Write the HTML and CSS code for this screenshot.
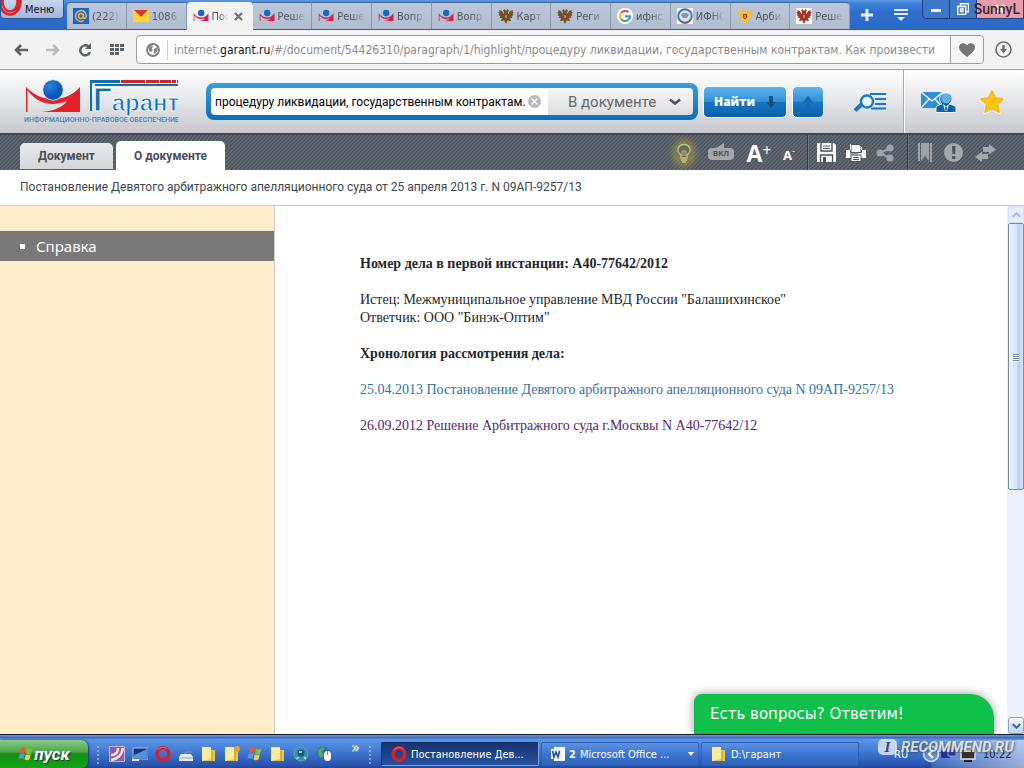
FILE: index.html
```html
<!DOCTYPE html>
<html lang="ru">
<head>
<meta charset="utf-8">
<title>Постановление Девятого арбитражного апелляционного суда</title>
<link rel="stylesheet" href="styles.css">
</head>
<body>
<svg class="sprite" aria-hidden="true">
  <symbol id="garant" viewBox="0 0 16 14"><path d="M.7 12V4c2 3.500 4.500 4.500 7.500 4.500S13.500 7 15.500 4v8H5.500c3-.2 5-1 6.500-3C7 11.500 3.500 9 1.500 6.500V12z" fill="#d81e4c"/><circle cx="8.200" cy="4" r="3.200" fill="#1768c4"/></symbol>
  <symbol id="eagle" viewBox="0 0 16 16"><path d="M8 3 6.500 1 5 2.500 6 4 5.500 6 4 3 1 2l.5 2L0 4l1.500 2L.5 7l2 1.500L1.500 10 4 10 3 13l2 0 1-1 2 4 2-4 1 1h2l-1-3 2.500 0-1-1.500 2-1.500-1-1L16 4l-1.500 0L15 2l-3 1-1.500 3L10 4l1-1.500L9.500 1z" fill="currentColor"/><path d="M6 6h4v3.500L8 11.500 6 9.500z" fill="#a03322"/><path d="M8 7v3" stroke="#f3d28a"/></symbol>
  <symbol id="opera" viewBox="0 0 16 16"><ellipse cx="8" cy="8" rx="5.800" ry="6.200" fill="none" stroke="#d9202b" stroke-width="3.600"/><path d="M3 4c2-3 7-3.500 9-1" fill="none" stroke="#f26a6a"/></symbol>
  <symbol id="folder" viewBox="0 0 16 16"><path d="M1 1h9v3h4v11H1z" fill="#e9c64b"/><path d="M1 1h9v12l-9 2z" fill="#fbeb9d"/><path d="M11 5v10" stroke="#c29a28"/></symbol>
  <symbol id="flag" viewBox="0 0 16 16"><path d="M3 2c2-1 3-1 5 0L7 7C5 6 4 6 2 7z" fill="#ee5a2d"/><path d="M9 2.500c2 1 3 1 5.500 0L13 8c-2 1-3 1-5 0z" fill="#7fc242"/><path d="M1.700 8c2-1 3-1 5 0l-1.200 5c-2-1-3-1-5 0z" fill="#4a9de8"/><path d="M7.700 8.500c2 1 3 1 5 0l-1.200 5c-2 1-3 1-5 0z" fill="#fccb3a"/></symbol>
</svg>

<header class="browser">
  <div class="tabbar">
    <button class="menu" type="button"><svg class="menu-logo" viewBox="0 0 22 18"><ellipse cx="9" cy="2" rx="9" ry="11" fill="none" stroke="#d9242b" stroke-width="5.500"/><path d="M1 6c2 6 8 9 13 5" fill="none" stroke="#f08a85"/></svg>Меню</button>
    <nav class="tabs" aria-label="Вкладки">
      <a class="tab" href="#"><svg class="fav" viewBox="0 0 16 16"><rect width="16" height="16" fill="#1567d2"/><circle cx="8" cy="8" r="2.400" fill="none" stroke="#f9b233" stroke-width="1.500"/><path d="M10.400 5.500V9c0 2 3 1.500 3-1A5.400 5.400 0 1 0 11 12.500" fill="none" stroke="#f9b233" stroke-width="1.500"/></svg><span>(222)</span></a>
      <a class="tab" href="#"><svg class="fav" viewBox="0 0 16 16"><path d="M0 2h16v12H0z" fill="#fbd62f"/><path d="M1 2h14L8 9z" fill="#e5352c"/><path d="m0 2 8 8 8-8" fill="none" stroke="#fff0a0" stroke-width=".6"/></svg><span>1086</span></a>
      <a class="tab active" href="#"><svg class="fav"><use href="#garant"/></svg><span>Пос</span><svg class="close" viewBox="0 0 9 9"><path d="m1 1 7 7m0-7L1 8" stroke="#777" stroke-width="2.400"/></svg></a>
      <a class="tab" href="#"><svg class="fav"><use href="#garant"/></svg><span>Реше</span></a>
      <a class="tab" href="#"><svg class="fav"><use href="#garant"/></svg><span>Реше</span></a>
      <a class="tab" href="#"><svg class="fav"><use href="#garant"/></svg><span>Вопр</span></a>
      <a class="tab" href="#"><svg class="fav"><use href="#garant"/></svg><span>Вопр</span></a>
      <a class="tab" href="#"><svg class="fav bronze"><use href="#eagle"/></svg><span>Карт</span></a>
      <a class="tab" href="#"><svg class="fav bronze"><use href="#eagle"/></svg><span>Реги</span></a>
      <a class="tab" href="#"><svg class="fav" viewBox="0 0 16 16"><circle cx="8" cy="8" r="8" fill="#fff"/><g fill="none" stroke-width="2"><path d="M4 5a5 5 0 0 1 7.500-.8" stroke="#ea4335"/><path d="M4 5a5 5 0 0 0 0 6" stroke="#fbbc05"/><path d="M4 11a5 5 0 0 0 7.300.8" stroke="#34a853"/><path d="M8 8.300h5c0 1.500-.6 2.700-1.700 3.500" stroke="#4285f4"/></g></svg><span>ифнс</span></a>
      <a class="tab" href="#"><svg class="fav" viewBox="0 0 16 16"><path fill="#fff" d="M0 0h16v16H0z"/><circle cx="8" cy="8" r="6.800" fill="#d9e4ed" stroke="#3976b8" stroke-width="2"/><path d="M4 7c1-3 7-3 8 0l-2 3H6z" fill="#8d969d"/><path d="M3 13a7 7 0 0 0 9 1" stroke="#d33" fill="none"/></svg><span>ИФНС</span></a>
      <a class="tab" href="#"><svg class="fav gold"><use href="#eagle"/></svg><span>Арби</span></a>
      <a class="tab" href="#"><svg class="fav red"><use href="#eagle"/></svg><span>Реше</span></a>
    </nav>
    <button class="bar-btn" type="button" aria-label="Новая вкладка"><svg width="12" height="12" viewBox="0 0 12 12"><path d="M6 0v12M0 6h12" stroke="#e4effb" stroke-width="3"/></svg></button>
    <button class="bar-btn" type="button" aria-label="Список вкладок"><svg width="14" height="13" viewBox="0 0 14 13"><path d="M0 1h14M0 5h14" stroke="#e4effb" stroke-width="2"/><path d="M3 8h8l-4 4z" fill="#e4effb"/></svg></button>
    <div class="window-btns">
      <button type="button" aria-label="Свернуть"><svg width="12" height="12" viewBox="0 0 12 12"><path d="M1 6h10v3H1z" fill="#fff"/></svg></button>
      <button type="button" aria-label="Восстановить"><svg width="12" height="12" viewBox="0 0 12 12"><path d="M3.500 3V.7h8v8H9M.7 3.500h8v8h-8zM3.500 6h2.500v2.500H3.500z" fill="none" stroke="#fff" stroke-width="1.400"/></svg></button>
      <button type="button" aria-label="Закрыть"><svg width="10" height="10" viewBox="0 0 10 10"><path d="m1 1 8 8m0-8L1 9" stroke="#fff" stroke-width="2.500"/></svg></button>
      <span class="author">SunnyL</span>
    </div>
  </div>
  <div class="address-row">
    <button class="nav-btn" type="button" aria-label="Назад"><svg width="14" height="12" viewBox="0 0 14 12"><path d="M14 6H2m5-5L2 6l5 5" fill="none" stroke="#5d6266" stroke-width="2.500"/></svg></button>
    <button class="nav-btn" type="button" aria-label="Вперёд"><svg width="14" height="12" viewBox="0 0 14 12"><path d="M0 6h12M7 1l5 5-5 5" fill="none" stroke="#b9bbbd" stroke-width="2.500"/></svg></button>
    <button class="nav-btn" type="button" aria-label="Обновить"><svg width="14" height="14" viewBox="0 0 14 14"><path d="M10.500 3.500A5 5 0 1 0 12 9" fill="none" stroke="#5d6266" stroke-width="2.500"/><path d="M13 0v6H7z" fill="#5d6266"/></svg></button>
    <button class="nav-btn" type="button" aria-label="Экспресс-панель"><svg width="14" height="11" viewBox="0 0 14 11"><path d="M0 1.500h14M0 5.500h14M0 9.500h9" stroke="#5d6266" stroke-width="3" stroke-dasharray="4 1"/></svg></button>
    <div class="address">
      <svg class="globe" viewBox="0 0 14 14"><circle cx="7" cy="7" r="6" fill="#fff" stroke="#7d7d7d" stroke-width="1.800"/><path d="M2 4c2-2 4-2 5-1L6 6l1 1-2 2-2-1zM8 6l3-2 1 3-3 4-1-1z" fill="#888"/></svg>
      <a class="url" href="#"><span>internet.</span><b>garant.ru</b>/#/document/54426310/paragraph/1/highlight/процедуру ликвидации, государственным контрактам. Как произвести</a>
      <button class="heart" type="button" aria-label="В закладки"><svg width="16" height="14" viewBox="0 0 16 14"><path d="M8 14C4 10.500 0 8 0 4.200 0 0 6-1.500 8 2.500 10-1.500 16 0 16 4.200 16 8 12 10.500 8 14z" fill="#757575"/></svg></button>
    </div>
    <button class="download" type="button" aria-label="Загрузки"><svg width="17" height="17" viewBox="0 0 17 17"><circle cx="8.500" cy="8.500" r="7.500" fill="none" stroke="#6d6d6d" stroke-width="1.600"/><path d="M8.500 4v5" stroke="#6d6d6d" stroke-width="2.400"/><path d="M5 8h7l-3.500 4.500z" fill="#6d6d6d"/></svg></button>
  </div>
</header>

<div class="site-head">
  <a class="logo" href="#" aria-label="Гарант">
    <svg width="160" height="44" viewBox="0 0 160 44">
      <defs><radialGradient id="ball" cx=".35" cy=".3"><stop stop-color="#2f83dc"/><stop offset="1" stop-color="#0759b6"/></radialGradient></defs>
      <path d="M2 34V9C10 17 18 21 29 21S49 17 56 9v25H18c11-1 20-4 25-11-5 2-9 3-14 3C18 26 9 20 3.500 12v22z" fill="#e52229"/>
      <circle cx="29" cy="12" r="10.300" fill="url(#ball)" stroke="#e9eef4" stroke-width=".8"/>
      <path d="M66 3.500h30" stroke="#0b6fb4" stroke-width="3"/><path d="M97 3.500h57" stroke="#cf2430" stroke-width="3" stroke-dasharray="24 1 13 1 11 1 4 1"/>
      <path d="M67 2v31M154 7H71" fill="none" stroke="#0b6fb4" stroke-width="2"/>
      <text class="logo-cap" x="69" y="33">Г<tspan class="logo-word">арант</tspan></text>
    </svg>
    <span class="slogan">ИНФОРМАЦИОННО-ПРАВОВОЕ ОБЕСПЕЧЕНИЕ</span>
  </a>
  <form class="search">
    <div class="search-box">
      <input class="query" type="text" aria-label="Поиск" value="процедуру ликвидации, государственным контрактам.">
      <button class="clear" type="reset" aria-label="Очистить"><svg width="13" height="13" viewBox="0 0 13 13"><circle cx="6.500" cy="6.500" r="6.500" fill="#b9b9b9"/><path d="m3.500 3.500 6 6m0-6-6 6" stroke="#fff" stroke-width="1.200"/></svg></button>
      <label class="scope"><select aria-label="Область поиска"><option>В документе</option></select><svg width="12" height="8" viewBox="0 0 12 8"><path d="m1 1.500 5 4 5-4" fill="none" stroke="#555" stroke-width="2.600"/></svg></label>
    </div>
    <button class="blue-btn find" type="button">Найти<svg width="10" height="12" viewBox="0 0 10 12"><path d="M3 0h4v6h3l-5 6-5-6h3z" fill="#17517d"/></svg></button>
    <button class="blue-btn up" type="button" aria-label="Предыдущее"><svg width="10" height="12" viewBox="0 0 10 12"><path d="M3 12h4V6h3L5 0 0 6h3z" fill="#1a69a8"/></svg></button>
  </form>
  <a class="head-link" href="#" aria-label="Расширенный поиск"><svg width="32" height="22" viewBox="0 0 32 22"><path d="M1 19.500 8 13" stroke="#1379c8" stroke-width="4"/><path d="M16 3h16M21 8h11M21 13h11M17 17.500h15" stroke="#1379c8" stroke-width="2.200"/><circle cx="13" cy="10.500" r="6" fill="#f5f6f8" stroke="#1379c8" stroke-width="2.400"/></svg></a>
  <div class="account">
    <a href="#" aria-label="Сообщения"><svg width="36" height="24" viewBox="0 0 36 24"><path d="M0 2h22v16H0z" fill="#2f8fd6"/><path d="m0 2 11 9 11-9M0 18l8-9m14 9-8-9" fill="none" stroke="#fff" stroke-width="1.300"/><path d="M15 22.500v-4c0-3 3-3.500 6-4.500-2-2-3-4-2-7 1-5 12-5 12 1 0 3-1 5-3 6 4 1 7 1.500 7 4.500v4z" fill="#0e62a8" stroke="#f0f3f7"/><circle cx="25" cy="8.500" r="5" fill="#61aee8"/><path d="m22 14 3 2.500 3-2.500-2 7h-2z" fill="#fff"/><path d="m25 16 1.200 2-1.200 4-1.200-4z" fill="#0e62a8"/></svg></a>
    <a href="#" aria-label="Избранное"><svg width="26" height="25" viewBox="0 0 26 25"><path d="m13 1.500 3.600 7.200 8 1.200-5.800 5.700 1.400 8L13 19.800l-7.200 3.800 1.400-8L1.400 9.900l8-1.200z" fill="#fdc513" stroke="#fff" stroke-width="2.500"/><path d="m13 1.500 3.600 7.200 8 1.200-5.800 5.700 1.400 8L13 19.800l-7.200 3.800 1.400-8L1.400 9.900l8-1.200z" fill="#fdc513" stroke="#f4a000"/></svg></a>
  </div>
</div>

<div class="toolbar">
  <nav class="doc-tabs"><a href="#">Документ</a><a class="current" href="#">О документе</a></nav>
  <div class="tools view">
    <button class="bulb" type="button" aria-label="Подсветка"><svg width="16" height="20" viewBox="0 0 16 20"><path d="M5 15v-3C-1 7 3 1.500 8 1.500s9 5.500 3 10.500v3z" fill="#666a5c" stroke="#c6c27c" stroke-width="1.300"/><path d="M6 13V8h4v5M8 8v5" stroke="#bbb66b" fill="none"/><path d="M5 17h6M6 19h4" stroke="#c6c27c" stroke-width="1.500"/></svg></button>
    <button class="toggle" type="button"><svg width="10" height="5" viewBox="0 0 10 5"><path d="M0 5 8 0v5z" fill="#a4a7ab"/></svg><span>ВКЛ</span></button>
    <button class="bigger" type="button">A<sup>+</sup></button>
    <button class="smaller" type="button">A<sup>-</sup></button>
  </div>
  <div class="tools">
    <button type="button" aria-label="Сохранить"><svg width="19" height="19" viewBox="0 0 19 19"><path d="M0 0h17l2 2v17H0z" fill="#fff"/><path d="M4 0v8h11V0M3.500 19v-7h12v7" fill="none" stroke="#4a5058" stroke-width="1.400"/><path d="M6 3h7M6 5.500h7" stroke="#4a5058"/><path d="M6 14h3v5H6z" fill="#4a5058"/></svg></button>
    <button type="button" aria-label="Печать"><svg width="20" height="18" viewBox="0 0 20 18"><path d="M0 6h4v3h12V6h4v8H0z" fill="#fff"/><path d="M5 .5h8l2 2v6H5zM5 11h10v6.500H5z" fill="#fff" stroke="#4a5058"/><path d="M4 10h8" stroke="#4a5058"/><path d="M7 13.500h6M7 15.500h6" stroke="#4a5058"/><path d="M4 0h1v6H4zM15 3h1v3h-1z" fill="#fff"/></svg></button>
    <button type="button" aria-label="Поделиться"><svg width="18" height="18" viewBox="0 0 18 18"><path d="M14 4 4 9l10 5" fill="none" stroke="#9fa3a8" stroke-width="2"/><circle cx="14" cy="4" r="3.600" fill="#9fa3a8"/><circle cx="4" cy="9" r="3.600" fill="#9fa3a8"/><circle cx="14" cy="14" r="3.600" fill="#9fa3a8"/></svg></button>
  </div>
  <div class="tools last">
    <button type="button" aria-label="Закладка"><svg width="14" height="19" viewBox="0 0 14 19"><path d="M0 0h2v18H0zM12 0h2v19h-2zM3 0h8v18l-4-5-4 5z" fill="#9fa3a8"/></svg></button>
    <button type="button" aria-label="Внимание"><svg width="19" height="19" viewBox="0 0 19 19"><circle cx="9.500" cy="9.500" r="9.500" fill="#a5a8ac"/><path d="M8 3h3.500L11 11H8.500zM8.200 13h3v3h-3z" fill="#4a5058"/></svg></button>
    <button type="button" aria-label="Сравнить"><svg width="21" height="18" viewBox="0 0 21 18"><path d="M8 3h6V0l7 5.500-7 5V8H8zM13 10H7V7.500L0 13l7 5v-3h6z" fill="#a5a8ac"/></svg></button>
  </div>
</div>
<h1 class="doc-title">Постановление Девятого арбитражного апелляционного суда от 25 апреля 2013 г. N 09АП-9257/13</h1>

<div class="workspace">
  <aside class="side"><a class="side-item" href="#">Справка</a></aside>
  <main class="doc">
    <h2>Номер дела в первой инстанции: А40-77642/2012</h2>
    <p>Истец: Межмуниципальное управление МВД России "Балашихинское"<br>Ответчик: ООО "Бинэк-Оптим"</p>
    <h2>Хронология рассмотрения дела:</h2>
    <p><a href="#">25.04.2013 Постановление Девятого арбитражного апелляционного суда N 09АП-9257/13</a></p>
    <p><a class="visited" href="#">26.09.2012 Решение Арбитражного суда г.Москвы N А40-77642/12</a></p>
  </main>
  <div class="scroll">
    <button class="scroll-btn off" type="button" aria-label="Вверх"><svg width="9" height="6" viewBox="0 0 9 6"><path d="m.7 5 3.800-3.800L8.300 5" fill="none" stroke="#a9bcdb" stroke-width="2"/></svg></button>
    <div class="track"><div class="thumb"></div></div>
    <button class="scroll-btn" type="button" aria-label="Вниз"><svg width="9" height="6" viewBox="0 0 9 6"><path d="m.7 1 3.800 3.800L8.300 1" fill="none" stroke="#4d6185" stroke-width="2"/></svg></button>
  </div>
  <button class="chat" type="button">Есть вопросы? Ответим!</button>
</div>

<footer class="taskbar">
  <button class="start" type="button"><svg width="16" height="16"><use href="#flag"/></svg>пуск</button>
  <span class="grip"></span>
  <nav class="quick" aria-label="Быстрый запуск">
    <a href="#" aria-label="Гарант"><svg viewBox="0 0 16 16"><path d="M0 0h16v16H0z" fill="#8f5ba6"/><path d="M2 9c5 0 7-3 7-7M2 14C9 13 13 9 14 2" stroke="#f3e6c8" stroke-width="2.500" fill="none"/><path d="M.5.5h15v15H.5z" fill="none" stroke="#cdb3d8"/></svg></a>
    <a href="#" aria-label="Рабочий стол"><svg viewBox="0 0 16 16"><path d="M1 2h15v11H1z" fill="#17336c" stroke="#a9c7ef"/><path d="M2 9 15 3v9H2z" fill="#4d8fe0"/><path d="M0 14h7" stroke="#dfe6ee" stroke-width="2"/></svg></a>
    <a href="#" aria-label="Opera"><svg><use href="#opera"/></svg></a>
    <a href="#" aria-label="Сканер"><svg viewBox="0 0 16 16"><path d="m1 11 2-3h10l2 3v4H1z" fill="#e8eaf0"/><path d="M2 12h13M7 8V6h7" stroke="#8d97ab" fill="none"/></svg></a>
    <a href="#" aria-label="Папка"><svg><use href="#folder"/></svg></a>
    <a href="#" aria-label="Новая папка"><svg viewBox="0 0 16 16"><use href="#folder"/><circle cx="13" cy="3" r="3" fill="#f49a35"/></svg></a>
    <a href="#" aria-label="Windows"><svg><use href="#flag"/></svg></a>
    <a href="#" aria-label="Папка"><svg><use href="#folder"/></svg></a>
    <a href="#" aria-label="Сеть"><svg viewBox="0 0 16 16"><circle cx="8" cy="8" r="7" fill="#3b83c5" stroke="#62b37c"/><circle cx="8" cy="7" r="3.500" fill="#165a73"/><path d="M6 6h3M3 13l3-2m7 2-2-2" stroke="#8ce0a1" stroke-width="2"/></svg></a>
    <a href="#" aria-label="Мышь"><svg viewBox="0 0 16 16"><circle cx="7" cy="7" r="6.500" fill="#2c6bb5"/><path d="M2 4c3-3 5-3 7-2L6 6l2 3-3 3-3-3z" fill="#56a655"/><rect x="8" y="5" width="7" height="10" rx="3.500" fill="#f5f5f5"/><path d="M11.500 5v4" stroke="#888"/></svg></a>
  </nav>
  <span class="more">»</span>
  <span class="grip"></span>
  <div class="tasks">
    <button class="task pressed" type="button"><svg width="16" height="16"><use href="#opera"/></svg>Постановление Дев...</button>
    <button class="task" type="button"><svg width="14" height="14" viewBox="0 0 14 14"><path d="M3 0h11v14H3z" fill="#fff"/><path d="M0 2h10v10H0z" fill="#e8eef9"/><path d="m1.500 4 1.500 6L5 5l2 5 1.500-6" fill="none" stroke="#27498f" stroke-width="1.500"/></svg><b>2</b> Microsoft Office ...<i class="arrow"></i></button>
    <button class="task" type="button"><svg width="16" height="16"><use href="#folder"/></svg>D:\гарант</button>
  </div>
  <div class="tray">
    <span class="lang">RU</span>
    <svg width="56" height="18" viewBox="0 0 56 18"><circle cx="9" cy="9" r="7.500" fill="#6392df" stroke="#e7eef9" stroke-width="1.500"/><path d="M11 5 7 9l4 4" fill="none" stroke="#fff" stroke-width="2"/><path d="M19 6h9v7h-9z" fill="#1731a8"/><path d="M26 4h8v7h-8z" fill="#283ca1" stroke="#8e9dcc"/><path d="M39 4h14v10H39z" fill="#333" stroke="#ddd" stroke-width="1.500"/><path d="M42 16h8" stroke="#222" stroke-width="2"/></svg>
    <time>10:22</time>
    <div class="stamp"><span>I</span>RECOMMEND.RU</div>
  </div>
</footer>
</body>
</html>
```
FILE: styles.css
```css
* { box-sizing: border-box; }
body {
  margin: 0;
  min-height: 100vh;
  display: flex;
  flex-direction: column;
  background: #fff;
  font-family: Roboto, "Liberation Sans", sans-serif;
}
button { font: inherit; color: inherit; border: 0; padding: 0; background: none; cursor: pointer; }
a { color: inherit; text-decoration: none; }
svg { flex: none; display: block; }
.sprite { position: absolute; width: 0; height: 0; }

/* Browser frame */
.browser, .taskbar { font-family: "DejaVu Sans Condensed", "Liberation Sans", sans-serif; font-size: 11px; }
.tabbar {
  display: flex;
  height: 30px;
  background: linear-gradient(#5b9ae0 0, #3a80d8 4px, #2e6fcd 12px, #2c69c6);
  border-bottom: 1px solid #2c5fae;
}
.menu {
  display: flex;
  align-items: center;
  width: 64px;
  height: 19px;
  margin-right: 3px;
  border: 1px solid #30548f;
  border-top: 0;
  border-radius: 0 0 4px 4px;
  background: linear-gradient(#c6d4ec, #a3b8de);
  color: #111;
}
.menu-logo { width: 22px; height: 18px; margin-right: 2px; }
.tabs { display: flex; flex: 1; padding-top: 2px; }
.tab {
  display: flex;
  flex: 1;
  align-items: center;
  min-width: 0;
  padding-left: 6px;
  gap: 3px;
  background: linear-gradient(#bcc8da, #b0bccf);
  border-right: 1px solid #8a97ae;
  border-top: 1px solid #44679c;
  color: #50555c;
}
.tab:first-child { border-radius: 4px 0 0 0; }
.tab:last-child { border-radius: 0 4px 0 0; }
.tab span { flex: 1; overflow: hidden; white-space: nowrap; -webkit-mask-image: linear-gradient(90deg, #000 45%, transparent 85%); mask-image: linear-gradient(90deg, #000 45%, transparent 85%); }
.tab.active { flex: 0 0 66px; background: #f2f2f2; border: 0; border-radius: 4px 4px 0 0; margin-bottom: -1px; padding-right: 10px; }
.fav { width: 16px; height: 16px; }
.close { width: 9px; height: 9px; }
.bronze { color: #6b5526; }
.gold { color: #f4c22c; }
.red { color: #9b3b2b; background: #fff; }
.bar-btn { display: grid; place-items: center; width: 34px; height: 30px; }
.window-btns { display: flex; position: relative; width: 102px; height: 19px; margin-left: 4px; border: 1px solid #1d3f80; border-radius: 0 0 0 5px; border-top: 0; background: #3f78cb; }
.window-btns button { display: grid; place-items: center; flex: 0 0 27px; border-right: 1px solid #1d3f80; }
.window-btns button:nth-child(3) { flex: 1; background: #e79cab; border: 0; }
.author { position: absolute; right: 3px; top: 0; font: 500 14px/19px Roboto, sans-serif; color: #33262e; }
.address-row { display: flex; align-items: center; height: 40px; padding: 0 12px 0 5px; background: #f2f2f2; border-bottom: 1px solid #a3a3a3; }
.nav-btn { display: grid; place-items: center; width: 32px; height: 28px; }
.address { display: flex; align-items: center; flex: 1; min-width: 0; height: 29px; margin: 0 11px 0 3px; border: 1px solid #9a9a9a; border-radius: 4px; background: #fff; }
.globe { width: 14px; height: 14px; margin: 0 7px 0 9px; }
.url { flex: 1; min-width: 0; overflow: hidden; white-space: nowrap; border-left: 1px solid #ccc; padding-left: 6px; font-size: 12px; line-height: 20px; color: #8a8a8a; }
.url b { font-weight: 400; color: #111; }
.heart { display: grid; place-items: center; width: 33px; height: 27px; border-left: 1px solid #9a9a9a; background: #f6f6f6; border-radius: 0 4px 4px 0; }
.download { width: 17px; height: 17px; }

/* Site header */
.site-head { display: flex; align-items: center; height: 65px; background: linear-gradient(#fff, #e2e3e6 55%, #c6c8cd); border-bottom: 2px solid #3f4650; }
.logo { width: 206px; padding-left: 24px; color: #4583bb; }
.logo-cap { font: 700 33px "Liberation Sans", sans-serif; fill: #0b6fb4; stroke: #f4f8fc; stroke-width: 1; }
.logo-word { font-size: 24px; }
.slogan { display: block; margin-top: -7px; font: 500 7px/10px Roboto, sans-serif; white-space: nowrap; }
.search { display: flex; align-items: center; flex: 1; min-width: 0; gap: 5px; }
.search-box { display: flex; align-items: center; flex: 1; min-width: 0; height: 37px; padding: 5px; border-radius: 8px; background: linear-gradient(#3a9edc, #0b6eba); }
.query { flex: 1; min-width: 0; height: 27px; border: 0; padding: 0 0 0 4px; border-radius: 4px 0 0 4px; font: 12px Roboto, sans-serif; color: #000; background: #fff; outline: 0; }
.clear { display: grid; place-items: center; width: 20px; height: 27px; padding-right: 7px; background: #fff; }
.scope { display: flex; align-items: center; position: relative; width: 145px; height: 27px; background: linear-gradient(#f7f7f7, #dcdddf); border-radius: 0 4px 4px 0; }
.scope select { appearance: none; width: 100%; height: 27px; border: 0; padding: 0 30px 0 20px; background: none; font: 15px Roboto, sans-serif; color: #666; }
.scope svg { position: absolute; right: 12px; pointer-events: none; }
.blue-btn { display: flex; align-items: center; justify-content: center; height: 32px; border: 1px solid #f4f8fc; border-radius: 5px; background: linear-gradient(#62b3ee, #2f8fd8 48%, #1478c6 50%, #0b5fa6); color: #fff; }
.find { width: 84px; gap: 11px; font: 800 12px "Open Sans", sans-serif; }
.up { width: 32px; }
.head-link { margin: 0 17px 0 30px; }
.account { display: flex; align-items: center; align-self: stretch; gap: 22px; width: 121px; padding-left: 17px; border-left: 1px solid #a7a9ae; box-shadow: inset 1px 0 #fff; }

/* Toolbar */
.toolbar { display: flex; justify-content: space-between; height: 35px; background: linear-gradient(135deg, #4f565f 37%, #626972 37% 50%, #4f565f 50% 87%, #626972 87%) 0 0 / 4px 4px; }
.doc-tabs { display: flex; flex: 1; align-items: flex-end; gap: 3px; padding-left: 20px; }
.doc-tabs a { width: 93px; height: 26px; margin-bottom: 1px; border-radius: 5px 5px 0 0; background: linear-gradient(#e8e9ea, #d5d6d8); font: 700 12px/26px Roboto, sans-serif; color: #494f56; text-align: center; }
.doc-tabs .current { width: 109px; height: 29px; margin: 0; line-height: 30px; background: #fff; }
.tools { display: flex; align-items: center; gap: 10px; width: 100px; padding-left: 9px; border-left: 1px solid #343a42; box-shadow: inset 1px 0 #737982; color: #fff; }
.tools.view { width: 136px; padding: 0 0 0 4px; border: 0; box-shadow: none; }
.tools.last { width: 117px; padding-left: 10px; gap: 12px; }
.bulb { display: grid; place-items: center; width: 18px; height: 22px; border-radius: 50%; background: #7d7c56; box-shadow: 0 0 7px 2px #938e4c; }
.toggle { display: flex; flex-direction: column; align-items: center; width: 26px; margin: 0 2px 3px 5px; }
.toggle span { width: 26px; height: 12px; border-radius: 4px; background: #a4a7ab; color: #4a5058; font: 700 8px/12px Roboto, sans-serif; }
.bigger { width: 26px; font: 700 23px/26px "Open Sans", sans-serif; white-space: nowrap; }
.smaller { width: 14px; font: 700 13px/16px "Open Sans", sans-serif; white-space: nowrap; padding-top: 5px; }
.tools sup { font-size: 70%; font-weight: 400; line-height: 0; vertical-align: 6px; }
.doc-title { margin: 0; height: 36px; padding-left: 20px; border-bottom: 1px solid #ccc; font: 12px/34px Roboto, sans-serif; color: #40464d; }

/* Document */
.workspace { display: flex; flex: 1; position: relative; min-height: 528px; }
.side { width: 275px; padding-top: 25px; border-right: 1px solid #ccc; background: #ffeecb; }
.side-item { display: flex; align-items: center; gap: 11px; height: 30px; padding-left: 20px; background: #797979; color: #fff; font: 15px "Noto Sans", sans-serif; }
.side-item::before { content: ""; width: 5px; height: 5px; background: #fff; }
.doc { flex: 1; padding: 49px 20px 0 85px; font: 14px/18px "Liberation Serif", serif; color: #22272b; }
.doc h2 { margin: 0 0 18px; font: inherit; font-weight: 700; }
.doc p { margin: 0 0 18px; }
.doc a { color: #3272a0; }
.doc .visited { color: #55266e; }
.scroll { display: flex; flex-direction: column; width: 17px; background: #eaf2fd; }
.scroll-btn { display: grid; place-items: center; height: 17px; margin-left: 1px; border: 1px solid #86a3cd; border-radius: 3px; background: linear-gradient(#f5f9ff, #bed4f5); }
.scroll-btn.off { border-color: #d5e1f3; background: #e3edfb; }
.track { flex: 1; }
.thumb { position: relative; height: 54%; margin-left: 1px; border: 1px solid #6f8ba7; border-radius: 2px; background: linear-gradient(90deg, #eef5ff, #d3e4fb 50%, #b8d0f4 75%, #dce9fb); }
.thumb::after { content: ""; position: absolute; left: 4px; top: 49%; width: 6px; height: 8px; background: repeating-linear-gradient(#71859e 0 1px, #eef5ff 1px 2px); }
.chat { position: absolute; right: 30px; bottom: 0; width: 300px; height: 40px; padding-left: 16px; border-radius: 8px 24px 0 0; background: #0fc14b; box-shadow: 0 0 10px #0006; clip-path: inset(-12px -12px 0 -12px); color: #fff; font: 15px "DejaVu Sans", sans-serif; text-align: left; }

/* Taskbar */
.taskbar { display: flex; height: 34px; padding-top: 5px; border-top: 1px solid #101c36; background: linear-gradient(#719bd8 0, #3b66ae 3px, #5c96e8 4px, #4680d8 14px, #2853ae 30px, #214795); color: #fff; }
.start { display: flex; align-items: center; justify-content: center; width: 88px; border-radius: 0 7px 7px 0; background: linear-gradient(#8acb83, #4fa44a 12px, #138c13 14px, #13a517); box-shadow: 1px 0 2px #173c76; font: italic 700 17px Roboto, sans-serif; text-shadow: 1px 1px 1px #234; }
.grip { width: 5px; margin: 5px 0 3px 8px; background: radial-gradient(#bad1f5 1px, transparent 1px) 0 0 / 4px 4px; opacity: .6; }
.quick { display: flex; align-items: center; gap: 7px; margin-left: 8px; }
.quick a, .quick svg { display: block; width: 16px; height: 16px; }
.more { width: 12px; margin-left: 19px; font-size: 16px; line-height: 16px; }
.more + .grip { margin-left: 5px; }
.grip + .tasks { margin-left: 8px; }
.tasks { display: flex; gap: 2px; flex: 1; padding: 2px 0; }
.task { display: flex; align-items: center; gap: 4px; flex: 0 1 158px; padding: 0 4px 0 9px; border: 1px solid #2b5eb5; border-radius: 2px; background: linear-gradient(#5b92e2, #3d75cf 50%, #2f63bb); white-space: nowrap; }
.task.pressed { background: linear-gradient(#15336f, #27529f); border-color: #132c5f #7ba2df #7ba2df #132c5f; }
.arrow { margin-left: auto; border: 3px solid transparent; border-top: 4px solid #fff; border-bottom: 0; }
.tray { display: flex; align-items: center; position: relative; width: 146px; padding-left: 16px; background: linear-gradient(90deg, transparent 53px, #ffffff22 54px, #ffffff88); }
.lang { width: 28px; }
.tray time { margin-left: 5px; color: #10182c; }
.stamp { position: absolute; left: 0; top: -1px; display: flex; align-items: center; gap: 4px; font: italic 700 15px/16px Roboto, sans-serif; color: #ffffffcc; text-shadow: 0 0 3px #3338, 1px 1px 2px #4448; }
.stamp span { width: 19px; border-radius: 5px; background: #e6e8eecc; color: #39466a; text-align: center; font-family: "Liberation Serif", serif; text-shadow: none; }
```
